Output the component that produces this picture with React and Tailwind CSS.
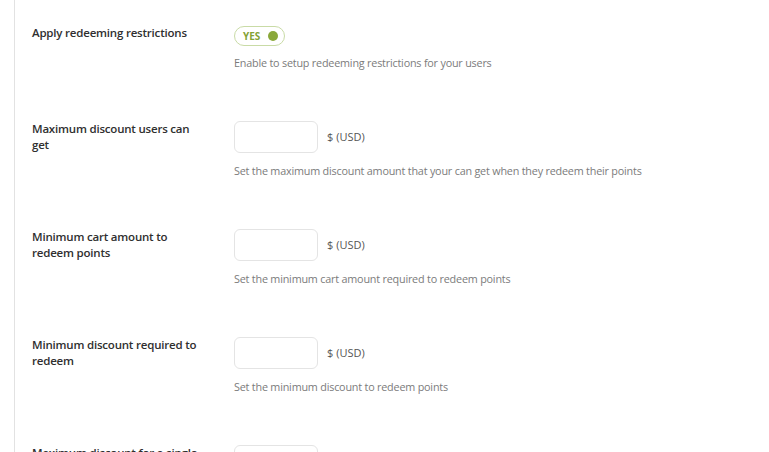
export default function App() {
  const rows = [
    {
      label: "Maximum discount users can get",
      desc: "Set the maximum discount amount that your can get when they redeem their points",
    },
    {
      label: "Minimum cart amount to redeem points",
      desc: "Set the minimum cart amount required to redeem points",
    },
    {
      label: "Minimum discount required to redeem",
      desc: "Set the minimum discount to redeem points",
    },
    {
      label: "Maximum discount for a single order",
      desc: "Set the maximum discount for a single order",
    },
  ];
  return (
    <div
      className="w-[769px] h-[452px] overflow-hidden bg-white"
      style={{ fontFamily: '"Open Sans", "Noto Sans", sans-serif' }}
    >
      <div className="ml-[14px] border-l border-[#e2e2e2] pl-[17px] pt-[25px] min-h-[452px] flex flex-col gap-[50px]">
        <div className="flex">
          <div className="w-[202px] pr-[28px] text-[11.5px] tracking-[-0.2px] leading-[16px] font-semibold text-[#2f2f2f]">
            Apply redeeming restrictions
          </div>
          <div className="pt-[1px]">
            <div className="w-[51px] h-[20px] rounded-full border border-[#c9dba6] flex items-center justify-between pl-[8px] pr-[6px]">
              <span className="text-[10px] font-bold text-[#84a235] leading-none">YES</span>
              <span className="w-[10px] h-[10px] rounded-full bg-[#8aa83a]"></span>
            </div>
            <div className="mt-[9px] text-[10.8px] tracking-[-0.2px] leading-[16px] text-[#7b7b7b]">
              Enable to setup redeeming restrictions for your users
            </div>
          </div>
        </div>
        {rows.map((r) => (
          <div className="flex" key={r.label}>
            <div className="w-[202px] pr-[28px] text-[11.5px] tracking-[-0.2px] leading-[16px] font-semibold text-[#2f2f2f]">
              {r.label}
            </div>
            <div>
              <div className="flex items-center">
                <input
                  className="w-[84px] h-[32px] rounded-[6px] border border-[#e4e4e4] bg-white outline-none"
                  type="text"
                />
                <span className="ml-[9px] text-[11px] text-[#555]">$ (USD)</span>
              </div>
              <div className="mt-[10px] text-[10.8px] tracking-[-0.2px] leading-[16px] text-[#7b7b7b]">{r.desc}</div>
            </div>
          </div>
        ))}
      </div>
    </div>
  );
}
